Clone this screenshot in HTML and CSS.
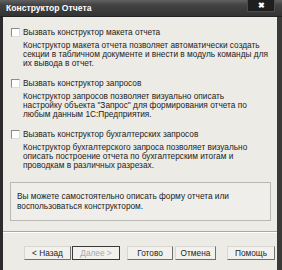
FILE: index.html
```html
<!DOCTYPE html>
<html lang="ru">
<head>
  <meta charset="UTF-8" />
  <title>Конструктор Отчета</title>
  <link rel="stylesheet" href="styles.css">
</head>
<body>

<div class="window">

  <div class="titlebar">
    <span class="title">Конструктор Отчета</span>
    <span class="close">&#10006;</span>
  </div>

  <div class="frame">
    <div class="body">

      <div class="option">
        <div class="check"><span class="box"></span>Вызвать конструктор макета отчета</div>
        <p class="desc">Конструктор макета отчета позволяет автоматически создать<br>секции в табличном документе и внести в модуль команды для<br>их вывода в отчет.</p>
      </div>

      <div class="option">
        <div class="check"><span class="box"></span>Вызвать конструктор запросов</div>
        <p class="desc">Конструктор запросов позволяет визуально описать<br>настройку объекта "Запрос" для формирования отчета по<br>любым данным 1С:Предприятия.</p>
      </div>

      <div class="option">
        <div class="check"><span class="box"></span>Вызвать конструктор бухгалтерских запросов</div>
        <p class="desc">Конструктор бухгалтерского запроса позволяет визуально<br>описать построение отчета по бухгалтерским итогам и<br>проводкам в различных разрезах.</p>
      </div>

      <div class="note">Вы можете самостоятельно описать форму отчета или<br>воспользоваться конструктором.</div>

    </div>

    <div class="footer">
      <button class="btn btn-back">&lt; Назад</button>
      <button class="btn btn-next" disabled>Далее &gt;</button>
      <button class="btn btn-done">Готово</button>
      <button class="btn btn-cancel">Отмена</button>
      <button class="btn btn-help">Помощь</button>
    </div>
  </div>

</div>

</body>
</html>
```

FILE: styles.css
```css
body {
  margin: 0;
  font-family: "Liberation Sans", Arial, sans-serif;
  font-size: 8.3px;
  color: #1c1c1c;
  background-color: #2f2f2f;
}
.window {
  width: 282px;
  height: 270px;
  overflow: hidden;
}
.titlebar {
  height: 16px;
  display: flex;
  align-items: center;
  padding-left: 6px;
  background: linear-gradient(#626262, #434343 30%, #333333);
  border-bottom: 1px solid #222;
  color: #ffffff;
  font-weight: bold;
  font-size: 8.6px;
}
.close {
  margin-left: auto;
  margin-right: 7px;
  align-self: flex-start;
  width: 26px;
  height: 11px;
  line-height: 11px;
  text-align: center;
  font-size: 8px;
  background-color: #1e1e1e;
  border: 1px solid #4c4c4c;
  border-top: none;
}
.frame {
  height: 253px;
  background-color: #ecebe6;
  border-left: 3px solid #2c2c2c;
  border-right: 5px solid #3a3a3a;
}
.body {
  padding: 10px 6px 0 7px;
}
.option {
  margin-bottom: 10px;
}
.check {
  display: flex;
  align-items: center;
  gap: 3px;
  height: 10px;
  line-height: 10px;
  margin-left: 1px;
}
.box {
  width: 7px;
  height: 7px;
  background-color: #ffffff;
  border: 1px solid;
  border-color: #8c8c8c #dcdcdc #dcdcdc #8c8c8c;
}
.desc {
  margin: 4px 0 0 13px;
  line-height: 9px;
}
.note {
  margin-top: 12px;
  padding: 8px 6px 9px 6px;
  line-height: 10px;
  border: 1px solid #b9b8b2;
  background-color: #efeeea;
}
.footer {
  margin-top: 10px;
  border-top: 1px solid #a9a8a2;
  box-shadow: inset 0 1px 0 #ffffff;
  padding: 14px 0 0 21px;
  display: flex;
}
.btn {
  height: 14px;
  padding: 0;
  font-family: inherit;
  font-size: 8.3px;
  color: #1c1c1c;
  background-color: #f2f1ed;
  border: 1px solid;
  border-color: #d8d7d2 #707070 #707070 #d8d7d2;
}
.btn-back { width: 47px; }
.btn-next {
  width: 48px;
  margin-left: 1px;
  color: #a9a9a9;
  border-color: #3a3a3a;
}
.btn-done { width: 46px; margin-left: 7px; }
.btn-cancel { width: 41px; margin-left: 2px; }
.btn-help { width: 48px; margin-left: 11px; }
```
